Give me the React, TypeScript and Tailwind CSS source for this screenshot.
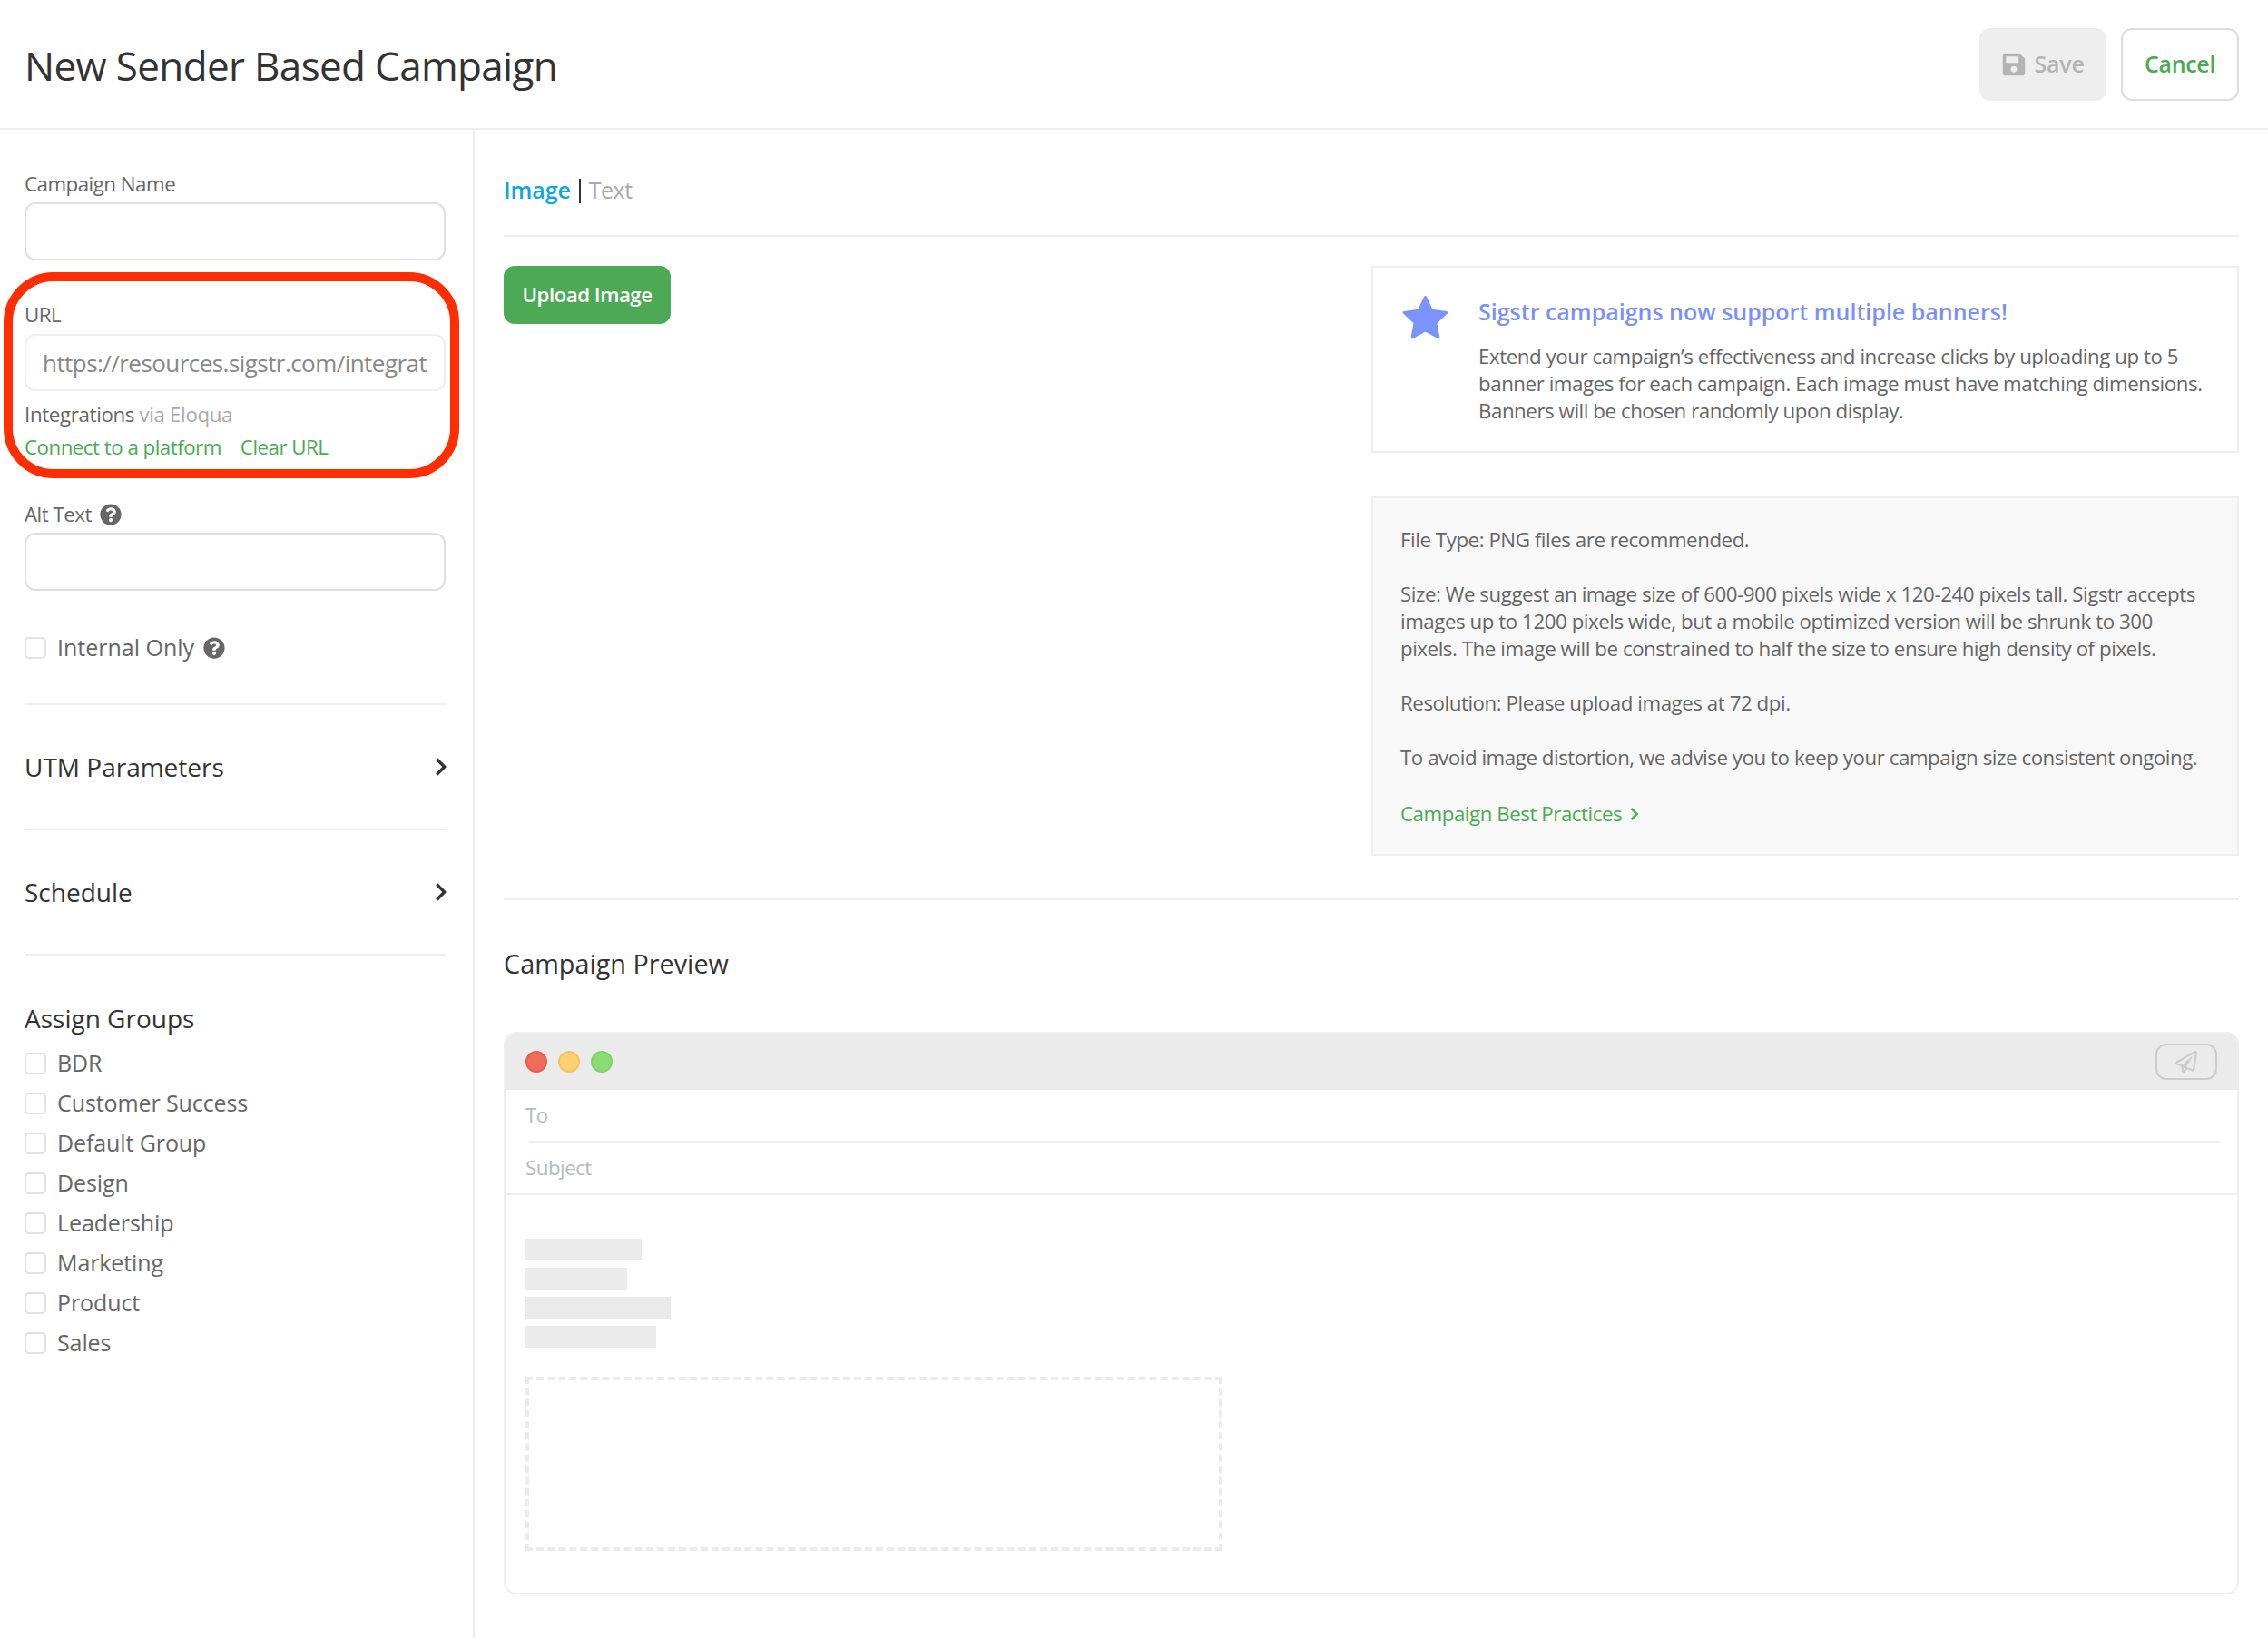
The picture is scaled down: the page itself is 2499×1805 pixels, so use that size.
import { FaChevronRight, FaQuestionCircle, FaRegPaperPlane, FaSave } from "react-icons/fa";

const groups = ["BDR", "Customer Success", "Default Group", "Design", "Leadership", "Marketing", "Product", "Sales"];

function Checkbox() {
  return <span className="block w-[24px] h-[24px] shrink-0 border-2 border-[#e2e2e2] rounded-[5px] bg-white" />;
}

function Field({ label, value, lighter, tight }: { label?: React.ReactNode; value?: string; lighter?: boolean; tight?: boolean }) {
  return (
    <div>
      <div className={`flex items-center gap-[9px] h-[30px] text-[22.3px] tracking-[-0.5px] text-[#666] ${tight ? "mb-[5px]" : "mb-[6px]"}`}>
        {label}
      </div>
      <input
        readOnly
        value={value ?? ""}
        className={`block w-full rounded-[12px] border-2 bg-white px-[18px] text-[26px] tracking-[-0.55px] text-[#888] outline-none ${
          lighter ? "h-[63px] border-[#eeeeee]" : "h-[64px] border-[#e0e0e0]"
        }`}
      />
    </div>
  );
}

function Collapse({ title }: { title: string }) {
  return (
    <div className="flex h-[136px] items-center justify-between border-b-2 border-[#eeeeee] box-content text-[28px] text-[#333]">
      <span>{title}</span>
      <FaChevronRight className="text-[#333] text-[22px] mr-[-6px]" />
    </div>
  );
}

function Star() {
  return (
    <svg viewBox="0 0 51 50" className="h-[50px] w-[51px] shrink-0 text-[#7b93ff]">
      <polygon
        points="25.5,3.5 32.55,18.3 48.8,20.4 36.9,31.7 39.9,47.8 25.5,40 11.1,47.8 14.1,31.7 2.2,20.4 18.45,18.3"
        fill="currentColor"
        stroke="currentColor"
        strokeWidth="3"
        strokeLinejoin="round"
      />
    </svg>
  );
}

export default function App() {
  return (
    <div className="min-h-[1805px] bg-white font-['Open_Sans',sans-serif] overflow-hidden">
      {/* Header */}
      <header className="flex h-[143px] items-center justify-between border-b-2 border-[#eeeeee] pl-[27px] pr-[32px]">
        <h1 className="mt-[3px] text-[44px] tracking-[-0.65px] text-[#333]">New Sender Based Campaign</h1>
        <div className="flex gap-[16px]">
          <button className="flex h-[80px] w-[140px] items-center justify-center gap-[8px] rounded-[12px] bg-[#eeeeee] text-[25px] font-semibold tracking-[-0.2px] text-[#b4b4b4]">
            <FaSave className="text-[28px]" />
            Save
          </button>
          <button className="h-[80px] w-[130px] rounded-[12px] border-2 border-[#dddddd] bg-white text-[25px] font-semibold tracking-[-0.3px] text-[#4caa55]">
            Cancel
          </button>
        </div>
      </header>

      <div className="flex">
        {/* Sidebar */}
        <aside className="relative w-[523px] shrink-0 min-h-[1662px] border-r-2 border-[#eeeeee] pl-[27px] pr-[30px] pt-[45px]">
          <Field label="Campaign Name" tight />
          <div className="mt-[45px]">
            <Field label="URL" value="https://resources.sigstr.com/integrations/eloqua" lighter />
          </div>
          <div className="mt-[8px] text-[22.3px] leading-[36px] tracking-[-0.5px]">
            <div className="text-[#666] tracking-[-0.35px]">
              Integrations <span className="text-[#aaaaaa]">via Eloqua</span>
            </div>
            <div className="flex items-center text-[#4caa55]">
              Connect to a platform
              <span className="mx-[10px] h-[20px] w-[1px] bg-[#dddddd]" />
              Clear URL
            </div>
          </div>
          <div className="mt-[41px]">
            <Field
              tight
              label={
                <>
                  Alt Text <FaQuestionCircle className="text-[24px] text-[#666]" />
                </>
              }
            />
          </div>
          <div className="mt-[48px] flex h-[30px] items-center text-[25px] text-[#666]">
            <Checkbox />
            <span className="ml-[12px]">Internal Only</span>
            <FaQuestionCircle className="ml-[10px] text-[24px]" />
          </div>
          <div className="mt-[46px] h-[2px] bg-[#eeeeee]" />
          <Collapse title="UTM Parameters" />
          <Collapse title="Schedule" />
          <div className="mt-[49px] h-[40px] text-[28px] leading-[40px] text-[#333]">Assign Groups</div>
          <div className="mt-[8px]">
            {groups.map((g) => (
              <div key={g} className="flex h-[44px] items-center text-[25px] tracking-[-0.1px] text-[#666]">
                <Checkbox />
                <span className="ml-[12px]">{g}</span>
              </div>
            ))}
          </div>
          {/* Red annotation around the URL block */}
          <div className="absolute left-[4px] top-[157px] h-[227px] w-[502px] rounded-[55px] border-[10px] border-[#ff2d00] pointer-events-none" />
        </aside>

        {/* Main */}
        <main className="flex-1 pl-[32px] pr-[32px] pt-[49px]">
          <div className="flex h-[36px] items-center text-[25px] tracking-[-0.5px]">
            <span className="font-semibold tracking-[-0.1px] text-[#0ea5e0]">Image</span>
            <span className="mx-[9px] h-[27px] w-[2px] bg-[#333]" />
            <span className="text-[#aaaaaa]">Text</span>
          </div>
          <div className="mt-[31px] h-[2px] bg-[#eeeeee]" />

          <div className="mt-[32px] flex items-start justify-between">
            <button className="h-[64px] w-[184px] rounded-[12px] bg-[#4caa55] text-[22.3px] font-semibold tracking-[-0.5px] text-white">
              Upload Image
            </button>
            <div className="w-[956px]">
              <div className="flex h-[206px] border-2 border-[#eeeeee] pt-[29px] pl-[32px]">
                <Star />
                <div className="ml-[33px] mt-[1px]">
                  <div className="text-[25px] leading-[36px] font-semibold text-[#7b8ffb]">
                    Sigstr campaigns now support multiple banners!
                  </div>
                  <p className="mt-[17px] whitespace-nowrap text-[22.3px] leading-[30px] tracking-[-0.45px] text-[#666]">
                    Extend your campaign’s effectiveness and increase clicks by uploading up to 5
                    <br />
                    banner images for each campaign. Each image must have matching dimensions.
                    <br />
                    Banners will be chosen randomly upon display.
                  </p>
                </div>
              </div>
              <div className="mt-[48px] whitespace-nowrap border-2 border-[#eeeeee] bg-[#f8f8f8] px-[30px] pt-[31px] pb-[29px] text-[22.3px] leading-[30px] tracking-[-0.45px] text-[#666]">
                <p>File Type: PNG files are recommended.</p>
                <p className="mt-[30px]">
                  Size: We suggest an image size of 600-900 pixels wide x 120-240 pixels tall. Sigstr accepts
                  <br />
                  images up to 1200 pixels wide, but a mobile optimized version will be shrunk to 300
                  <br />
                  pixels. The image will be constrained to half the size to ensure high density of pixels.
                </p>
                <p className="mt-[30px]">Resolution: Please upload images at 72 dpi.</p>
                <p className="mt-[30px]">To avoid image distortion, we advise you to keep your campaign size consistent ongoing.</p>
                <p className="mt-[32px] flex items-center gap-[6px] text-[#4caa55]">
                  Campaign Best Practices <FaChevronRight className="text-[16px]" />
                </p>
              </div>
            </div>
          </div>

          <div className="mt-[47px] h-[2px] bg-[#eeeeee]" />
          <h2 className="mt-[50px] h-[40px] text-[28.8px] leading-[40px] text-[#333]">Campaign Preview</h2>

          {/* Email preview window */}
          <div className="mt-[55px] overflow-hidden rounded-[14px] border-2 border-[#eeeeee]">
            <div className="flex h-[62px] items-center justify-between bg-[#ebebeb] px-[22px]">
              <div className="flex gap-[12px]">
                <span className="h-[24px] w-[24px] rounded-full border-2 border-[#e4604e] bg-[#ef6c5a]" />
                <span className="h-[24px] w-[24px] rounded-full border-2 border-[#f2c264] bg-[#ffd26e]" />
                <span className="h-[24px] w-[24px] rounded-full border-2 border-[#80d26a] bg-[#8cdc74]" />
              </div>
              <div className="flex h-[40px] w-[68px] items-center justify-center rounded-[12px] border-2 border-[#cccccc] text-[#cccccc]">
                <FaRegPaperPlane className="text-[24px]" />
              </div>
            </div>
            <div className="flex h-[56px] items-center pl-[22px] text-[22.3px] tracking-[-0.5px] text-[#b5babd]">To</div>
            <div className="ml-[26px] mr-[18px] h-[2px] bg-[#eeeeee]" />
            <div className="flex h-[56px] items-center pl-[22px] text-[22.3px] tracking-[-0.5px] text-[#b5babd]">Subject</div>
            <div className="h-[2px] bg-[#eeeeee]" />
            <div className="px-[22px] pt-[48px] pb-[46px]">
              <div className="flex flex-col gap-[8px]">
                <div className="h-[24px] w-[128px] bg-[#ebebeb]" />
                <div className="h-[24px] w-[112px] bg-[#ebebeb]" />
                <div className="h-[24px] w-[160px] bg-[#ebebeb]" />
                <div className="h-[24px] w-[144px] bg-[#ebebeb]" />
              </div>
              <div className="mt-[32px] h-[192px] w-[768px] border-4 border-dashed border-[#ebebeb]" />
            </div>
          </div>
        </main>
      </div>
    </div>
  );
}
